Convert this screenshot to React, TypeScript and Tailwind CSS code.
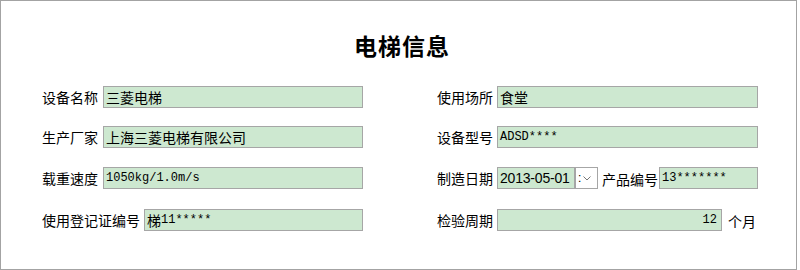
// 电梯信息 表单面板
const cjk = "[font-family:'Noto_Sans_CJK_SC',sans-serif]";
const mono = "[font-family:'Liberation_Mono','Noto_Sans_CJK_SC',monospace] text-[12px]";

const Box = ({ children, className = "" }: { children?: React.ReactNode; className?: string }) => (
  <div
    className={`h-[22px] border border-[#a6a6a6] bg-[#cde8d0] flex items-center px-[2px] text-[14px] text-black ${className}`}
  >
    {children}
  </div>
);

const Label = ({ text }: { text: string }) => (
  <span className="text-[14px] text-black whitespace-nowrap leading-none">{text}</span>
);

const App = () => {
  return (
    <div className={`w-[797px] h-[270px] border border-[#a3a3a3] bg-white ${cjk}`}>
      {/* 标题 */}
      <div className="mt-[28px] h-[32px] leading-[32px] text-center text-[23px] font-bold text-black pl-[7px] tracking-[1px]">
        电梯信息
      </div>

      {/* 两列字段 */}
      <div className="mt-[25px] ml-[41px] grid grid-cols-[321px_321px] gap-x-[74px] gap-y-[18px]">
        <div className="flex items-center gap-[5px]">
          <Label text="设备名称" />
          <Box className="flex-1">三菱电梯</Box>
        </div>
        <div className="flex items-center gap-[4px]">
          <Label text="使用场所" />
          <Box className="flex-1">食堂</Box>
        </div>

        <div className="flex items-center gap-[5px]">
          <Label text="生产厂家" />
          <Box className="flex-1">上海三菱电梯有限公司</Box>
        </div>
        <div className="flex items-center gap-[4px]">
          <Label text="设备型号" />
          <Box className="flex-1">
            <span className={mono}>ADSD****</span>
          </Box>
        </div>

        <div className="flex items-center gap-[5px]">
          <Label text="载重速度" />
          <Box className="flex-1">
            <span className={mono}>1050kg/1.0m/s</span>
          </Box>
        </div>
        <div className="flex items-center">
          <Label text="制造日期" />
          <Box className="w-[78px] ml-[4px] [font-family:'Liberation_Sans',sans-serif] text-[14px] text-[#222] tracking-[-0.2px]">
            2013-05-01
          </Box>
          {/* 下拉按钮 */}
          <div className="h-[22px] w-[23px] border border-[#a6a6a6] bg-white flex items-center pl-[2px] gap-[2px]">
            <span className="text-[12px] leading-none text-black [font-family:'Liberation_Sans',sans-serif]">:</span>
            <svg width="8" height="5" viewBox="0 0 8 5" className="mt-[1px]">
              <path d="M0.5 0.5 L4 4 L7.5 0.5" fill="none" stroke="#777" strokeWidth="1" />
            </svg>
          </div>
          <span className="ml-[4px] mr-[1px]">
            <Label text="产品编号" />
          </span>
          <Box className="flex-1">
            <span className={mono}>13*******</span>
          </Box>
        </div>

        <div className="flex items-center gap-[4px]">
          <Label text="使用登记证编号" />
          <Box className="flex-1">
            梯<span className={mono}>11*****</span>
          </Box>
        </div>
        <div className="flex items-center gap-[4px]">
          <Label text="检验周期" />
          <Box className="w-[225px] justify-end pr-[4px]">
            <span className={mono}>12</span>
          </Box>
          <span className="ml-[2px]">
            <Label text="个月" />
          </span>
        </div>
      </div>
    </div>
  );
};

export default App;
